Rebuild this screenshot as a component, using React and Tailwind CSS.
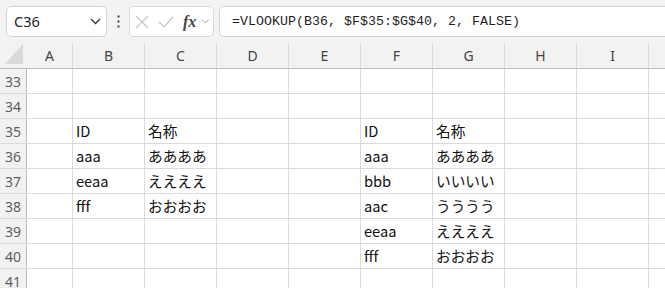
import React from "react";

const cols = [
  { key: "A", w: "w-[46px]" },
  { key: "B", w: "w-[72px]" },
  { key: "C", w: "w-[72px]" },
  { key: "D", w: "w-[72px]" },
  { key: "E", w: "w-[72px]" },
  { key: "F", w: "w-[72px]" },
  { key: "G", w: "w-[72px]" },
  { key: "H", w: "w-[72px]" },
  { key: "I", w: "w-[72px]" },
  { key: "J", w: "w-[72px]", hidden: true },
];

const rows = [
  { n: 33, cells: {} },
  { n: 34, cells: {} },
  { n: 35, cells: { B: "ID", C: "名称", F: "ID", G: "名称" } },
  { n: 36, cells: { B: "aaa", C: "ああああ", F: "aaa", G: "ああああ" } },
  { n: 37, cells: { B: "eeaa", C: "ええええ", F: "bbb", G: "いいいい" } },
  { n: 38, cells: { B: "fff", C: "おおおお", F: "aac", G: "うううう" } },
  { n: 39, cells: { F: "eeaa", G: "ええええ" } },
  { n: 40, cells: { F: "fff", G: "おおおお" } },
  { n: 41, cells: {} },
];

function Chevron({ className }) {
  return (
    <svg width="11" height="7" viewBox="0 0 11 7" className={className}>
      <path d="M1 1l4.5 4.5L10 1" fill="none" stroke="currentColor" strokeWidth="1.3" />
    </svg>
  );
}

function Toolbar() {
  return (
    <div className="flex h-[40px] items-start bg-[#f3f3f3] pl-[6px] pt-[6px]">
      <div className="flex h-[31px] w-[101px] shrink-0 items-center justify-between rounded-[5px] border border-[#d4d4d4] bg-white pl-[7px] pr-[5px]">
        <span className="text-[14.5px] text-[#242424]">C36</span>
        <Chevron className="text-[#333]" />
      </div>
      <div className="flex h-[31px] w-[22px] shrink-0 items-center justify-center">
        <svg width="3" height="13" viewBox="0 0 3 13">
          <rect x="0.5" y="0.5" width="2" height="2" fill="#444" />
          <rect x="0.5" y="5.5" width="2" height="2" fill="#444" />
          <rect x="0.5" y="10.5" width="2" height="2" fill="#444" />
        </svg>
      </div>
      <div className="flex h-[31px] w-[85px] shrink-0 items-center rounded-[5px] border border-[#d9d9d9] bg-white pl-[5px]">
        <svg width="14" height="14" viewBox="0 0 14 14">
          <path d="M1 1l12 12M13 1L1 13" stroke="#c4c4c4" strokeWidth="1.2" fill="none" />
        </svg>
        <svg width="16" height="12" viewBox="0 0 16 12" className="ml-[9px]">
          <path d="M1 6l5 5L15 1" stroke="#c4c4c4" strokeWidth="1.2" fill="none" />
        </svg>
        <span className="ml-[9px] text-[16px] font-bold italic leading-none text-[#444] [font-family:'Liberation_Serif',serif]">
          fx
        </span>
        <Chevron className="ml-[4px] scale-75 text-[#9a9a9a]" />
      </div>
      <div className="ml-[5px] flex h-[31px] w-[470px] shrink-0 items-center rounded-[5px] border border-[#d4d4d4] bg-white pl-[12px]">
        <span className="whitespace-pre text-[13.33px] text-[#1f1f1f] [font-family:'Liberation_Mono',monospace]">
          =VLOOKUP(B36, $F$35:$G$40, 2, FALSE)
        </span>
      </div>
    </div>
  );
}

function HeaderRow() {
  return (
    <div className="flex h-[29px] items-end border-b border-[#bdbdbd] bg-[#f2f2f2]">
      <div className="flex h-[29px] w-[27px] shrink-0 items-end justify-end pb-[4px] pr-[4px]">
        <svg width="18" height="20" viewBox="0 0 18 20">
          <path d="M18 0V20H0Z" fill="#d9d9d9" />
        </svg>
      </div>
      {cols.map((c) => (
        <div
          key={c.key}
          className={`${c.w} flex h-[25px] shrink-0 items-center justify-center border-r border-[#dcdcdc] text-[14px] text-[#444]`}
        >
          {c.hidden ? "" : c.key}
        </div>
      ))}
    </div>
  );
}

function DataRow({ row }) {
  return (
    <div className="flex h-[25px] border-b border-[#dadada]">
      <div className="flex w-[27px] shrink-0 items-center justify-center border-r border-[#b8b8b8] bg-[#f2f2f2] pt-[1px] text-[14px] text-[#5e5e5e]">
        {row.n}
      </div>
      {cols.map((c) => (
        <div
          key={c.key}
          className={`${c.w} flex shrink-0 items-end overflow-hidden whitespace-nowrap border-r border-[#dadada] pb-[1px] pl-[3px] text-[14.67px] leading-[22px] text-[#111] [font-family:'Noto_Sans_CJK_JP',sans-serif]`}
        >
          {row.cells[c.key] || ""}
        </div>
      ))}
    </div>
  );
}

export default function App() {
  return (
    <div className="h-[288px] w-[665px] overflow-hidden bg-white [font-family:'Noto_Sans','Noto_Sans_CJK_JP',sans-serif]">
      <Toolbar />
      <HeaderRow />
      {rows.map((r) => (
        <DataRow key={r.n} row={r} />
      ))}
    </div>
  );
}
